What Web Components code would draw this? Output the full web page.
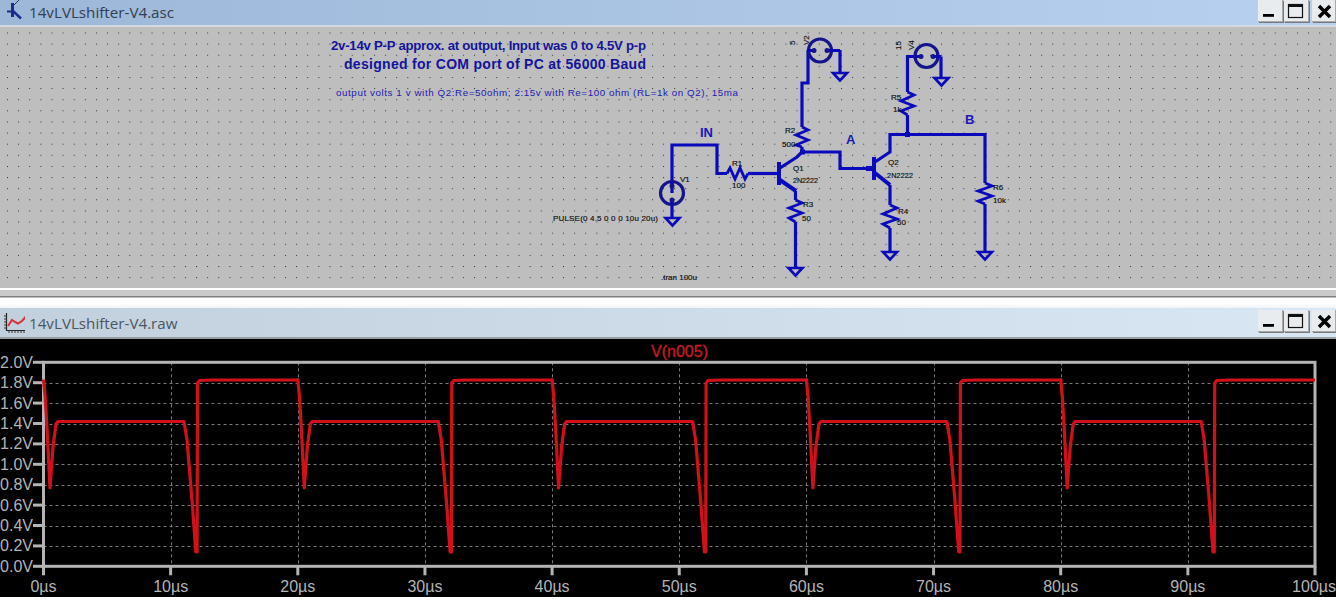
<!DOCTYPE html>
<html>
<head>
<meta charset="utf-8">
<title>14vLVLshifter-V4</title>
<style>
  html, body { margin: 0; height: 100%; background: #fff; overflow: hidden; }
  body { display: flex; flex-direction: column; width: 1336px; height: 601px; }
  svg { display: block; }
</style>
</head>
<body>
<sim-window title-text="14vLVLshifter-V4.asc" variant="active">
  <svg slot="icon" width="22" height="22" viewBox="0 0 22 22">
    <path d="M17 0 L11 6" stroke="#2c3a66" stroke-width="1" fill="none"/>
    <path d="M5 11.5 H11" stroke="#1a2c8c" stroke-width="2" fill="none"/>
    <path d="M10.5 3 V17" stroke="#1a2c8c" stroke-width="3" fill="none"/>
    <path d="M11 11 L19 18.5" stroke="#1a2c8c" stroke-width="2.4" fill="none"/>
  </svg>
  <schematic-sheet></schematic-sheet>
</sim-window>
<window-gap></window-gap>
<sim-window title-text="14vLVLshifter-V4.raw" variant="inactive">
  <svg slot="icon" width="22" height="22" viewBox="0 0 22 22">
    <path d="M3.5 1 V18.5 H23" stroke="#222" stroke-width="1.2" fill="none"/>
    <path d="M1 4 H4 M1 7 H4 M1 10 H4 M1 13 H4 M1 16 H4 M6 18 V21 M9 18 V21 M12 18 V21 M15 18 V21 M18 18 V21 M21 18 V21" stroke="#333" stroke-width="1" fill="none"/>
    <path d="M5 14 L9 8 L12 10 L15 11.5 L19 9 L23 4.5" stroke="#d83038" stroke-width="2" fill="none"/>
  </svg>
  <waveform-plot></waveform-plot>
</sim-window>

<script>
const SVG_NS = "http://www.w3.org/2000/svg";

class WinButton extends HTMLElement {
  constructor() {
    super();
    const glyphs = {
      min: `<rect x="5" y="14" width="11" height="2.8" fill="#000"/>`,
      max: `<rect x="4.5" y="4.5" width="14" height="13" fill="none" stroke="#111" stroke-width="1.2"/><rect x="4" y="4" width="15" height="3" fill="#111"/>`,
      close: `<path d="M7 6 L18 17 M18 6 L7 17" stroke="#000" stroke-width="3.4" fill="none"/>`,
    };
    const type = this.getAttribute("type") || "min";
    this.attachShadow({ mode: "open" }).innerHTML = `
      <style>
        :host {
          display: block;
          width: 25px;
          height: 22px;
          background: #e8ecef;
          box-shadow: inset -1px -1px 0 #a8a8a8, 1px 1px 0 #77797c;
          margin-left: 1px;
        }
        svg { display: block; }
      </style>
      <svg width="25" height="22" viewBox="0 0 25 22">${glyphs[type]}</svg>`;
  }
}
customElements.define("win-button", WinButton);

class SimWindow extends HTMLElement {
  constructor() {
    super();
    const title = this.getAttribute("title-text") || "";
    this.attachShadow({ mode: "open" }).innerHTML = `
      <style>
        :host { display: block; }
        .bar {
          display: flex;
          align-items: flex-start;
          box-sizing: border-box;
          font-family: "Open Sans", "DejaVu Sans", sans-serif;
          font-size: 15.2px;
        }
        :host([variant="active"]) .bar {
          height: 27px;
          color: #333f4e;
          background: linear-gradient(90deg, #9db7d8, #b8d1f0);
          border-bottom: 2px solid #d4d9de;
        }
        :host([variant="inactive"]) .bar {
          height: 31px;
          padding-top: 2px;
          color: #4a5663;
          background: linear-gradient(90deg, #c2d0dd, #d9e7f4);
          border-bottom: 2px solid #9a9ea2;
        }
        .icon { width: 29px; height: 22px; padding-left: 3px; box-sizing: border-box; flex: none; }
        :host([variant="active"]) .icon { padding-left: 2px; }
        :host([variant="inactive"]) .icon { margin-top: 2px; }
        .title { flex: 1; line-height: 24px; white-space: nowrap; }
        :host([variant="inactive"]) .title { line-height: 27px; }
        .buttons { display: flex; }
      </style>
      <div class="bar">
        <div class="icon"><slot name="icon"></slot></div>
        <div class="title">${title}</div>
        <div class="buttons">
          <win-button type="min"></win-button>
          <win-button type="max"></win-button>
          <win-button type="close" style="margin-left:3px;width:24px"></win-button>
        </div>
      </div>
      <slot></slot>`;
  }
}
customElements.define("sim-window", SimWindow);

class WindowGap extends HTMLElement {
  constructor() {
    super();
    this.attachShadow({ mode: "open" }).innerHTML = `
      <style>
        :host {
          display: block;
          height: 20px;
          box-sizing: border-box;
          background: linear-gradient(#fff 0 2px, #c9c9c9 2px 8px, #7f7f7f 8px 9px, #fff 10px 15px, #f0f4f8 20px);
        }
      </style>`;
  }
}
customElements.define("window-gap", WindowGap);

class SchematicSheet extends HTMLElement {
  constructor() {
    super();
    const wires = [
      "M672 193 V145 H717 V173.5 H727",
      "M748 173.5 H778",
      "M808 50 V83 H802 V127",
      "M802 147 V152 H840 V168.5 H873",
      "M795.5 191 V200",
      "M795.5 222 V268",
      "M890 185 V205",
      "M890 228 V252",
      "M875 162 L890 152 V134.5 H985 V183",
      "M985 204 V252",
      "M917 56.5 H907.5 V92",
      "M907.5 115 V134.5",
      "M840 50 V73",
      "M941 56.5 V78",
      "M672 202 V218",
      "M780 168 L797 157 L802 152",
    ];
    const thick = ["M780 180 L796 191", "M875 173 L890 185", "M779 162 V185", "M874 157 V180"];
    const resistors = [
      "M727 173.5 L730 168 L735 179 L740 168 L745 179 L748 173.5",
      "M802 127 L808 130 L796 135 L808 140 L796 145 L802 147",
      "M795.5 200 L802 203 L789 208 L802 213 L789 218 L795.5 222",
      "M890 205 L897 208 L883 214 L897 219 L883 224 L890 228",
      "M907.5 92 L914 95 L901 101 L914 106 L901 111 L907.5 115",
      "M985 183 L992 186 L978 191 L992 196 L978 201 L985 204",
    ];
    const grounds = [[672.5, 218], [795.5, 268], [890, 252], [985, 252], [840, 73], [941.5, 78]];
    const sources = [
      { x: 672, y: 193, r: 11.5, a: "M672 181 V188 M672 199 V205", dots: [[672, 186], [672, 200]] },
      { x: 820, y: 50.5, r: 11.5, a: "M808 50.5 H814 M826 50.5 H840", dots: [[814, 50.5], [827, 50.5]] },
      { x: 926.5, y: 56, r: 11.5, a: "M915 56.5 H921 M933 56.5 H941", dots: [[921, 56.5], [933, 56.5]] },
    ];
    const blue = "#0a0abc";

    const heading = [
      [331, 50, 315, "2v-14v P-P approx. at output, Input was 0 to 4.5V p-p", "note-b"],
      [344, 69, 302, "designed for COM port of PC at 56000 Baud", "note-b wide"],
      [336, 96, 402, "output volts 1 v with Q2:Re=50ohm; 2:15v with Re=100 ohm (RL=1k on Q2), 15ma", "note"],
    ];
    const nets = [[700, 137, "IN"], [846, 144, "A"], [965, 124, "B"]];
    const labels = [
      [732, 166, "R1"], [732, 188, "100"], [785, 133, "R2"], [782, 147, "500"],
      [793, 171, "Q1"], [793, 183, "2N2222", 25], [803, 207, "R3"], [802, 221, "50"],
      [888, 165, "Q2"], [887, 178, "2N2222", 26], [898, 214, "R4"], [897, 225, "50"],
      [891, 100, "R5"], [893, 112, "1k"], [993, 190, "R6"], [993, 203, "10k"],
      [680, 182, "V1"], [553, 221, "PULSE(0 4.5 0 0 0 10u 20u)", 105], [661, 280, ".tran 100u", 36],
    ];

    const svg = `
      <svg width="1336" height="261" viewBox="0 27 1336 261">
        <defs>
          <pattern id="dots" x="7" y="32.5" width="11.12" height="11.12" patternUnits="userSpaceOnUse">
            <rect width="1" height="1" fill="#333"/>
          </pattern>
        </defs>
        <rect x="0" y="27" width="1336" height="261" fill="url(#dots)"/>
        ${wires.map((d) => `<path d="${d}" class="wire"/>`).join("")}
        ${thick.map((d) => `<path d="${d}" class="wire" style="stroke-width:4"/>`).join("")}
        ${resistors.map((d) => `<path d="${d}" class="wire" style="stroke-width:2.8"/>`).join("")}
        ${grounds.map(([x, y]) => `<path d="M${x - 7} ${y} H${x + 7} L${x} ${y + 7.5} Z" class="wire" style="stroke-width:2.6"/>`).join("")}
        ${sources.map((s) => `<circle cx="${s.x}" cy="${s.y}" r="${s.r}" class="wire" style="stroke:#14148c"/><path d="${s.a}" class="wire"/>${s.dots.map(([x, y]) => `<circle cx="${x}" cy="${y}" r="2.5" fill="#14148c"/>`).join("")}`).join("")}
        <rect x="800" y="149.5" width="5" height="5" fill="${blue}"/>
        <rect x="905" y="132" width="5" height="5" fill="${blue}"/>
        <rect x="866" y="166" width="6" height="5" fill="${blue}"/>
        ${heading.map(([x, y, w, t, c]) => `<text x="${x}" y="${y}" textLength="${w}" lengthAdjust="spacing" class="${c}">${t}</text>`).join("")}
        ${nets.map(([x, y, t]) => `<text x="${x}" y="${y}" class="net">${t}</text>`).join("")}
        ${labels.map(([x, y, t, w]) => `<text x="${x}" y="${y}" class="part${t === "2N2222" ? " small" : ""}"${w ? ` textLength="${w}" lengthAdjust="spacing"` : ""}>${t}</text>`).join("")}
        <text transform="translate(795 45) rotate(-90)" class="part">5</text>
        <text transform="translate(809 45) rotate(-90)" class="part">V2</text>
        <text transform="translate(901 50) rotate(-90)" class="part">15</text>
        <text transform="translate(914 50) rotate(-90)" class="part">V4</text>
      </svg>`;

    this.attachShadow({ mode: "open" }).innerHTML = `
      <style>
        :host { display: block; height: 261px; background: #bebebe; }
        svg { display: block; }
        .wire { fill: none; stroke: ${blue}; stroke-width: 3.2; }
        text { font-family: "Liberation Sans", Arial, sans-serif; }
        .note-b { font-size: 13.2px; font-weight: bold; fill: #14149c; }
        .note-b.wide { font-size: 14px; }
        .note { font-size: 9.8px; fill: #1c1cb0; }
        .net { font-size: 13px; font-weight: bold; fill: #1818b8; }
        .part { font-size: 8px; fill: #0c0c0c; stroke: #0c0c0c; stroke-width: 0.15; }
        .part.small { font-size: 7.2px; }
      </style>${svg}`;
  }
}
customElements.define("schematic-sheet", SchematicSheet);

class WaveformPlot extends HTMLElement {
  constructor() {
    super();
    this.attachShadow({ mode: "open" }).innerHTML = `
      <style>
        :host { display: block; height: 258px; background: #000; }
        svg { display: block; }
        text { font-family: "Liberation Sans", Arial, sans-serif; font-size: 16px; fill: #b4b4b4; }
        .axis { stroke: #b4b4b4; stroke-width: 3; fill: none; }
        .grid { stroke: #7a7a7a; stroke-width: 1; stroke-dasharray: 3 3; fill: none; }
        .trace { stroke: #d2101a; stroke-width: 3.2; fill: none; stroke-linejoin: round; }
        .trace-name { fill: #c01c22; stroke: #c01c22; stroke-width: 0.4; text-anchor: middle; }
      </style>
      <svg width="1336" height="258" viewBox="0 339 1336 258"></svg>`;
    this.draw();
  }

  xAt(us) {
    return 43.5 + us * 12.715;
  }

  yAt(volts) {
    return 566.3 - volts * 102;
  }

  add(svg, name, attrs, text) {
    const el = document.createElementNS(SVG_NS, name);
    for (const key in attrs) el.setAttribute(key, attrs[key]);
    if (text) el.textContent = text;
    svg.appendChild(el);
  }

  draw() {
    const svg = this.shadowRoot.querySelector("svg");
    const left = this.xAt(0);
    const right = this.xAt(100);
    const top = this.yAt(2);
    const bottom = this.yAt(0);

    for (let v = 2; v <= 18; v += 2) {
      const y = Math.round(this.yAt(v / 10)) + 0.5;
      this.add(svg, "path", { class: "grid", d: `M${left} ${y} H${right}` });
    }
    for (let t = 10; t < 100; t += 10) {
      const x = Math.round(this.xAt(t)) + 0.5;
      this.add(svg, "path", { class: "grid", d: `M${x} ${top} V${bottom}` });
    }

    this.add(svg, "rect", { class: "axis", x: left, y: top, width: right - left, height: bottom - top });

    for (let v = 0; v <= 20; v += 2) {
      const y = this.yAt(v / 10);
      this.add(svg, "path", { class: "axis", d: `M33 ${y} H${left}` });
      this.add(svg, "text", { x: 33, y: y + 5.5, "text-anchor": "end" }, (v / 10).toFixed(1) + "V");
    }
    for (let t = 0; t <= 100; t += 10) {
      const x = this.xAt(t);
      this.add(svg, "path", { class: "axis", d: `M${x} ${bottom} V${bottom + 9}` });
      this.add(svg, "text", { x: t === 100 ? 1336 : x, y: 592, "text-anchor": t === 100 ? "end" : "middle" }, t + "µs");
    }

    this.add(svg, "text", { x: 679.5, y: 356.5, class: "trace-name" }, "V(n005)");

    // one 20us period, offsets in px from the start of the period
    const period = [
      [0, 379.5], [1.6, 396], [3.6, 430], [6.5, 488], [9.5, 447], [12.5, 424], [14.5, 421.5],
      [140.5, 421.5], [143.5, 440], [148.5, 500], [152.3, 552], [153.6, 552], [154, 383], [156, 380.5],
      [168, 380], [254.3, 380],
    ];
    const points = [];
    for (let n = 0; n < 5; n++) {
      for (const [dx, y] of period) points.push(`${(left + dx + n * 254.3).toFixed(1)},${y}`);
    }
    this.add(svg, "polyline", { class: "trace", points: points.join(" ") });
  }
}
customElements.define("waveform-plot", WaveformPlot);
</script>
</body>
</html>
